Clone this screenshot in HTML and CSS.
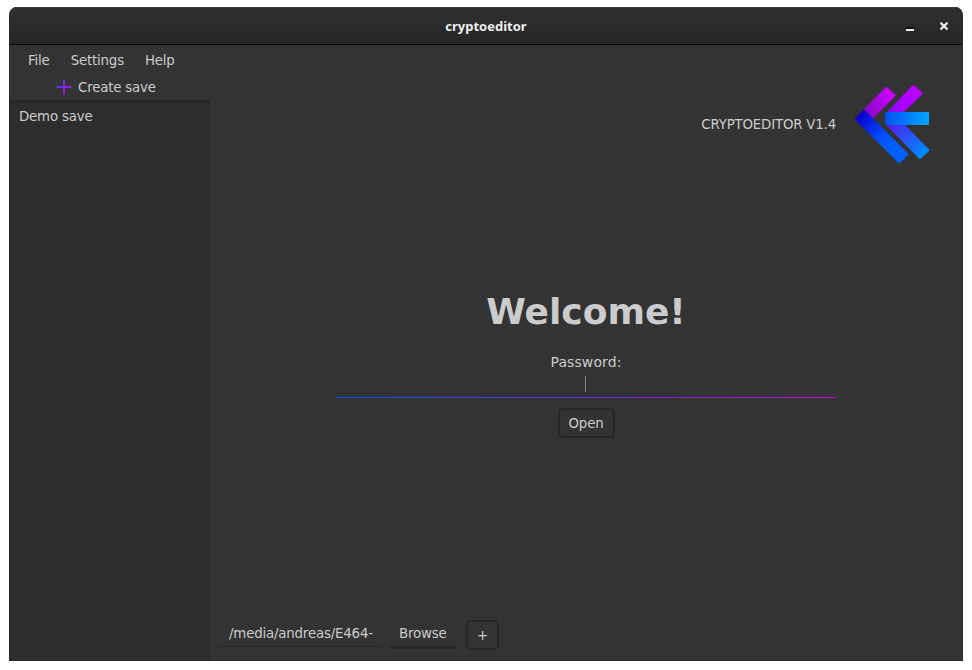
FILE: index.html
```html
<!DOCTYPE html>
<html lang="en">
<head>
<meta charset="utf-8">
<title>cryptoeditor</title>
<link rel="stylesheet" href="styles.css">
</head>
<body>
<div class="window">
  <header class="titlebar">
    <span class="title">cryptoeditor</span>
    <div class="controls">
      <svg width="8" height="10" viewBox="0 0 8 10"><path d="M0 7h8" stroke="#111" stroke-width="2"/><path d="M0 9h8" stroke="#eee" stroke-width="2"/></svg>
      <svg width="8" height="10" viewBox="0 0 8 10"><path d="M.8 .6l6.400 6.400M7.200 .6l-6.400 6.400" stroke="#111" stroke-width="2.2"/><path d="M.5 1.500l7 7M7.500 1.500l-7 7" stroke="#eee" stroke-width="2.4"/></svg>
    </div>
  </header>
  <div class="content">
    <aside class="side">
      <nav class="menu"><span>File</span><span>Settings</span><span>Help</span></nav>
      <div class="create">
        <svg width="16" height="16" viewBox="0 0 16 16">
          <defs><linearGradient id="plus" gradientUnits="userSpaceOnUse" x1="2" y1="2" x2="12" y2="12"><stop offset="0" stop-color="#3a45ea"/><stop offset="1" stop-color="#a812da"/></linearGradient></defs>
          <path d="M7 .5h2V7h6.500v2H9v6.500H7V9H.5V7H7z" fill="url(#plus)"/>
        </svg>
        <span>Create save</span>
      </div>
      <div class="saves"><span>Demo save</span></div>
    </aside>
    <main class="main">
      <div class="brand">
        <span>CRYPTOEDITOR V1.4</span>
        <svg class="logo" width="80" height="84" viewBox="852 82 80 84">
          <defs>
            <linearGradient id="a" gradientUnits="userSpaceOnUse" x1="868" y1="113" x2="890" y2="92"><stop offset="0" stop-color="#8a0ac8"/><stop offset="1" stop-color="#cb00ff"/></linearGradient>
            <linearGradient id="b" gradientUnits="userSpaceOnUse" x1="860" y1="115" x2="895" y2="150"><stop offset="0" stop-color="#0a00d0"/><stop offset=".7" stop-color="#0058ff"/><stop offset="1" stop-color="#0060ff"/></linearGradient>
            <linearGradient id="c" gradientUnits="userSpaceOnUse" x1="891" y1="115" x2="912" y2="94"><stop offset="0" stop-color="#7d10f0"/><stop offset=".5" stop-color="#a800ff"/><stop offset="1" stop-color="#b800ff"/></linearGradient>
            <linearGradient id="d" gradientUnits="userSpaceOnUse" x1="892" y1="122" x2="923" y2="153"><stop offset="0" stop-color="#5020f0"/><stop offset="1" stop-color="#0088ff"/></linearGradient>
            <linearGradient id="e" gradientUnits="userSpaceOnUse" x1="885" y1="0" x2="929" y2="0"><stop offset="0" stop-color="#0050f0"/><stop offset="1" stop-color="#00a8ff"/></linearGradient>
          </defs>
          <path d="M863 110L885.500 87.500Q886.500 86.500 887.500 87.500L896 95.500L873 118.500z" fill="url(#a)"/>
          <path d="M887 112L912.500 85.500Q913.500 84.500 914.500 85.500L923 93.500L899 117L887 122z" fill="url(#c)"/>
          <path d="M887 124L904 124L929 149.500Q929.500 150.500 929 151L921 158.500Q920 159 919 158.500L886 125z" fill="url(#d)"/>
          <path d="M864 109.500L908 153.500Q908.500 154.500 908 155L900 163Q899 163.500 898 162.500L855.500 120Q854.500 119 855.500 118z" fill="url(#b)"/>
          <rect x="885" y="112" width="44" height="13" rx="1" fill="url(#e)"/>
        </svg>
      </div>
      <section class="welcome">
        <h1>Welcome!</h1>
        <label>Password:</label>
        <div class="password"><i class="caret"></i></div>
        <button class="open">Open</button>
      </section>
      <footer class="path">
        <div class="field">/media/andreas/E464-</div>
        <div class="browse">Browse</div>
        <button class="add">+</button>
      </footer>
    </main>
  </div>
</div>
</body>
</html>
```
FILE: styles.css
```css
* { box-sizing: border-box; }
body { margin: 0; padding: 7px 9px 9px; background: #fff; height: 670px; overflow: hidden;
  font: 13.333px/18px "DejaVu Sans", sans-serif; letter-spacing: -.17px; color: #ccc; }
.window { width: 954px; height: 654px; background: #333; border-radius: 8px 8px 0 0; overflow: hidden;
  border: 1px solid #2c2c2c; border-top: 0; display: flex; flex-direction: column; }
.titlebar { height: 38px; flex: none; display: grid; grid-template-columns: 1fr auto 1fr; align-items: center;
  background: linear-gradient(#2f2f2f, #262626); border-bottom: 1px solid #050505; box-shadow: inset 0 1px #3e3e3e; }
.title { grid-column: 2; font: bold 13px/16px "Noto Sans", sans-serif; letter-spacing: 0; color: #eee; padding-top: 1px; }
.controls { display: flex; justify-content: flex-end; gap: 26px; padding-right: 14px; }
.controls svg { display: block; }
.content { display: flex; flex: 1; min-height: 0; }
.side { width: 200px; display: flex; flex-direction: column; }
.menu { display: flex; gap: 21px; padding: 7px 0 0 18px; height: 27px; }
.create { display: flex; gap: 6px; padding-left: 46px; height: 28px; align-items: flex-start; }
.create svg { display: block; margin-top: 7px; }
.create span { margin-top: 7px; }
.saves { flex: 1; background: #2d2d2d; border-top: 3px solid #262626; padding: 5px 9px; }
.main { flex: 1; display: flex; flex-direction: column; }
.brand { display: flex; justify-content: flex-end; align-items: center; gap: 16px; padding: 37px 30px 0 0; }
.brand span { padding-top: 2px; }
.brand svg { display: block; }
.welcome { display: flex; flex-direction: column; align-items: center; margin-top: 125px; }
h1 { margin: 0; font-size: 36px; line-height: 42px; letter-spacing: 0; }
label { margin-top: 21px; font-size: 14px; line-height: 16px; letter-spacing: .1px; }
.password { width: 500px; height: 28px; display: flex; justify-content: center; padding: 6px 1px 0 0;
  border-bottom: 1px solid; border-image: linear-gradient(90deg, #0055ff, #c800e0) 1; }
.caret { width: 1px; height: 16px; background: #858585; }
button { font: inherit; letter-spacing: inherit; color: inherit; background: transparent; border: 2px solid #272727; border-radius: 5px; padding: 0; }
.open { width: 57px; height: 30px; margin-top: 10px; padding-top: 2px; }
.path { display: flex; margin-top: auto; padding: 0 0 10px 10px; align-items: flex-start; }
.field { width: 160px; height: 27px; padding: 5px 8px 0 9px; border-bottom: 1px solid #272727; white-space: nowrap; }
.browse { width: 66px; height: 29px; margin-left: 10px; padding: 5px 9px 0; border-bottom: 3px solid #272727; }
.add { width: 33px; height: 30px; margin-left: 10px; padding-top: 2px; }
```
